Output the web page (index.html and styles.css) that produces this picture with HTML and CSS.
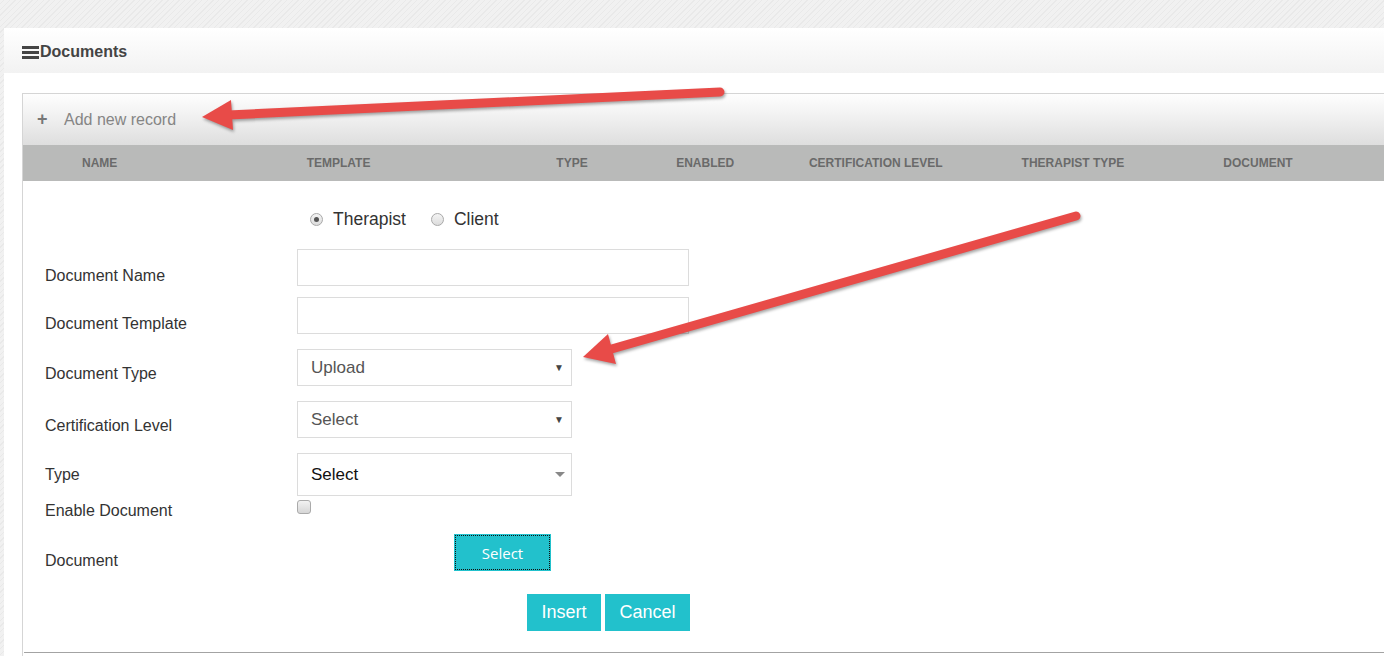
FILE: index.html
```html
<!DOCTYPE html>
<html>
<head>
<meta charset="utf-8">
<link rel="stylesheet" href="styles.css">
</head>
<body>
<div class="panel">
  <div class="panel-head">
    <svg class="burger" width="17" height="13" viewBox="0 0 17 13"><rect x="0" y="0" width="17" height="3" fill="#444"/><rect x="0" y="5" width="17" height="3" fill="#444"/><rect x="0" y="10" width="17" height="3" fill="#444"/></svg>
    <span class="panel-title">Documents</span>
  </div>
  <div class="panel-body">
    <div class="grid">
      <div class="toolbar"><span class="plus">+</span><span class="add">Add new record</span></div>
      <div class="thead">
        <div class="th c1">NAME</div>
        <div class="th c2">TEMPLATE</div>
        <div class="th c3">TYPE</div>
        <div class="th c4">ENABLED</div>
        <div class="th c5">CERTIFICATION LEVEL</div>
        <div class="th c6">THERAPIST TYPE</div>
        <div class="th c7">DOCUMENT</div>
      </div>
      <div class="form">
        <div class="row radio-row">
          <div class="label"></div>
          <div class="radios">
            <span class="radio checked"></span><span class="radio-text">Therapist</span>
            <span class="radio"></span><span class="radio-text">Client</span>
          </div>
        </div>
        <div class="row r-name">
          <div class="label pt16">Document Name</div>
          <div class="input wide"></div>
        </div>
        <div class="row r-template">
          <div class="label pt16">Document Template</div>
          <div class="input wide"></div>
        </div>
        <div class="row">
          <div class="label pt14">Document Type</div>
          <div class="input sel"><span class="sel-text">Upload</span><span class="tri">&#9660;</span></div>
        </div>
        <div class="row">
          <div class="label pt14">Certification Level</div>
          <div class="input sel"><span class="sel-text">Select</span><span class="tri">&#9660;</span></div>
        </div>
        <div class="row">
          <div class="label pt11">Type</div>
          <div class="input sel tall"><span class="sel-text dark">Select</span><span class="caret"></span></div>
        </div>
        <div class="row r-enable">
          <div class="label">Enable Document</div>
          <span class="checkbox"></span>
        </div>
        <div class="row r-doc">
          <div class="label pt16">Document</div>
          <div class="upload-wrap"><span class="btn-select">Select</span></div>
        </div>
        <div class="row r-actions">
          <span class="btn">Insert</span>
          <span class="btn">Cancel</span>
        </div>
      </div>
      <div class="grid-bottom"></div>
    </div>
  </div>
</div>
<svg class="arrows" width="1384" height="656" viewBox="0 0 1384 656">
  <g class="arrow">
    <line x1="720" y1="92" x2="228" y2="115" stroke="#e84b48" stroke-width="9" stroke-linecap="round"/>
    <polygon points="202,117 231,100 233,130" fill="#e84b48"/>
  </g>
  <g class="arrow">
    <line x1="1076" y1="216" x2="608" y2="350" stroke="#e84b48" stroke-width="9" stroke-linecap="round"/>
    <polygon points="583,357 608,334 616,364" fill="#e84b48"/>
  </g>
</svg>
</body>
</html>
```
FILE: styles.css
```css
html, body {
  margin: 0;
  padding: 0;
  width: 1384px;
  height: 656px;
  overflow: hidden;
}
body {
  position: relative;
  font-family: "Liberation Sans", Arial, sans-serif;
  background-color: #efefef;
  background-image: repeating-linear-gradient(-45deg, #f1f1f1 0px, #f1f1f1 3px, #e9e9e9 3px, #e9e9e9 4px);
}
.panel {
  margin: 28px 0 0 4px;
  background: #fff;
  height: 628px;
  overflow: hidden;
}
.panel-head {
  height: 45px;
  box-sizing: border-box;
  padding-top: 3px;
  display: flex;
  align-items: center;
  padding-left: 18px;
  background: linear-gradient(#ffffff, #f2f2f2);
}
.burger {
  display: block;
  margin-right: 1px;
}
.panel-title {
  font-weight: bold;
  font-size: 16px;
  color: #444;
}
.panel-body {
  padding: 20px 0 0 18px;
}
.grid {
  border: 1px solid #d5d5d5;
  border-right: none;
  border-bottom: none;
  width: 1400px;
  height: 562px;
  overflow: hidden;
}
.toolbar {
  height: 51px;
  display: flex;
  align-items: center;
  background: linear-gradient(#fefefe, #f2f2f2 40%, #dedede);
  color: #858585;
}
.plus {
  font-size: 18px;
  font-weight: bold;
  margin-left: 14px;
  width: 27px;
  color: #777;
}
.add {
  font-size: 16px;
}
.thead {
  height: 36px;
  display: flex;
  align-items: center;
  background: #b9bab9;
  padding-left: 59px;
}
.th {
  font-size: 12px;
  font-weight: bold;
  color: #6a6a6a;
}
.c1 { width: 225px; }
.c2 { width: 250px; }
.c3 { width: 120px; }
.c4 { width: 133px; }
.c5 { width: 213px; }
.c6 { width: 202px; }
.c7 { width: 200px; }
.form {
  padding-left: 22px;
  color: #333;
}
.row {
  display: flex;
  align-items: flex-start;
  margin-top: 15px;
}
.label {
  width: 252px;
  flex: none;
  font-size: 16px;
  line-height: 20px;
  color: #333;
}
.pt16 { padding-top: 17px; }
.pt14 { padding-top: 15px; }
.pt11 { padding-top: 12px; }
.radio-row {
  margin-top: 26px;
  height: 24px;
  align-items: center;
}
.radios {
  display: flex;
  align-items: center;
  padding-left: 13px;
}
.radio {
  width: 13px;
  height: 13px;
  box-sizing: border-box;
  border: 1px solid #a9a9a9;
  border-radius: 50%;
  background: linear-gradient(#f4f4f4, #dcdcdc);
  position: relative;
}
.radio.checked::after {
  content: "";
  position: absolute;
  left: 3px;
  top: 3px;
  width: 5px;
  height: 5px;
  border-radius: 50%;
  background: #555;
}
.radio-text {
  font-size: 17.5px;
  margin-left: 10px;
  margin-right: 25px;
  color: #333;
}
.r-name { margin-top: 18px; }
.r-template { margin-top: 11px; }
.input {
  box-sizing: border-box;
  height: 37px;
  border: 1px solid #dcdcdc;
  background: #fff;
}
.wide { width: 392px; }
.sel {
  width: 275px;
  display: flex;
  align-items: center;
  justify-content: space-between;
  padding: 0 7px 0 13px;
}
.tall { height: 43px; }
.sel-text {
  font-size: 17px;
  color: #555;
}
.sel-text.dark { color: #111; }
.tri {
  font-size: 10px;
  color: #444;
}
.caret {
  width: 0;
  height: 0;
  border-left: 5px solid transparent;
  border-right: 5px solid transparent;
  border-top: 5px solid #888;
  margin-right: -1px;
}
.r-enable {
  margin-top: 4px;
  height: 14px;
}
.r-enable .label { padding-top: 1px; }
.checkbox {
  width: 14px;
  height: 14px;
  box-sizing: border-box;
  border: 1px solid #aaa;
  border-radius: 3px;
  background: linear-gradient(#f2f2f2, #d6d6d6);
}
.r-doc { margin-top: 20px; }
.upload-wrap {
  padding-left: 157px;
}
.btn-select {
  display: flex;
  align-items: center;
  justify-content: center;
  box-sizing: border-box;
  width: 97px;
  height: 37px;
  background: #22c1cc;
  border: 1px solid #22c1cc;
  color: #fff;
  font-family: "Open Sans", sans-serif;
  font-size: 15px;
  position: relative;
}
.btn-select::after {
  content: "";
  position: absolute;
  inset: 0;
  border: 1px dotted #111;
}
.r-actions {
  margin-top: 23px;
  padding-left: 482px;
  gap: 4px;
}
.btn {
  display: flex;
  align-items: center;
  justify-content: center;
  height: 37px;
  background: #22c1cc;
  color: #fff;
  font-size: 18px;
}
.btn:first-child { width: 74px; }
.btn:last-child { width: 85px; }
.grid-bottom {
  margin-top: 21px;
  margin-left: 1px;
  border-top: 1px solid #a3a3a3;
}
.arrows {
  position: absolute;
  left: 0;
  top: 0;
  pointer-events: none;
}
.arrow {
  filter: drop-shadow(1px 2px 1.5px rgba(0, 0, 0, 0.35));
}
```
